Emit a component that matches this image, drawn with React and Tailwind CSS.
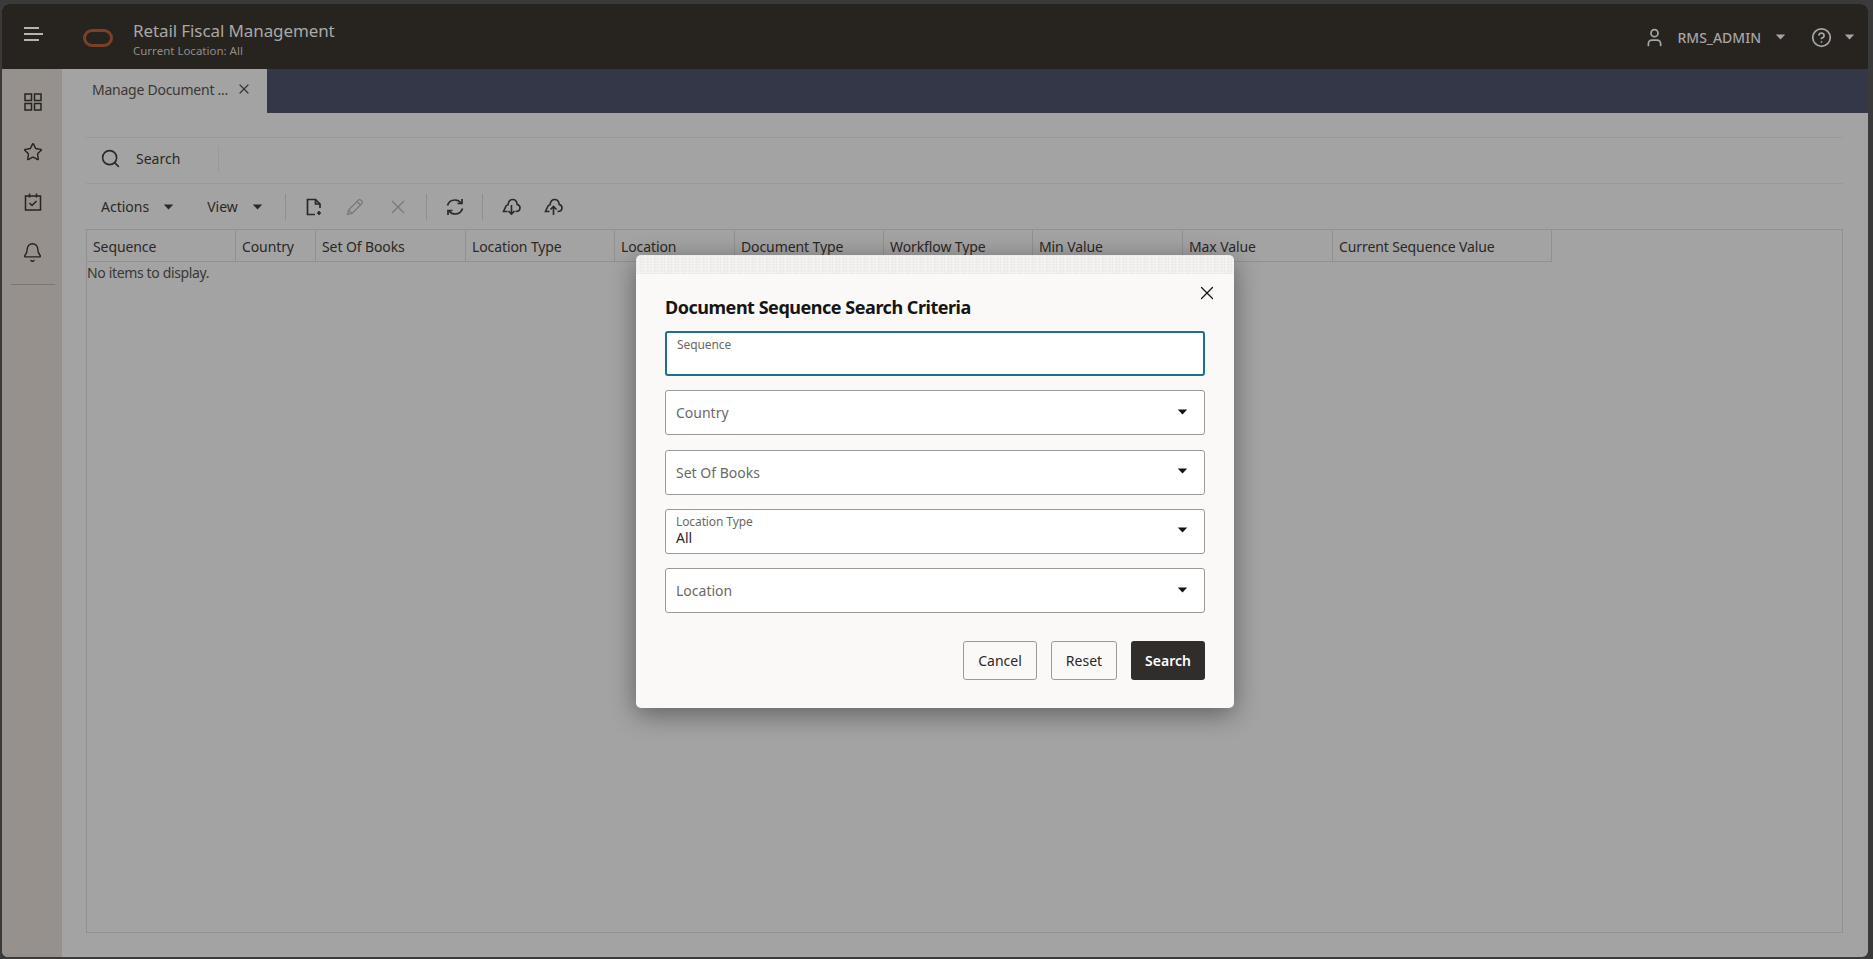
import { Bell, CircleHelp, Search, Star, User, X } from "lucide-react";

const font = "font-['Noto_Sans',sans-serif]";

const columns = [
  { label: "Sequence", width: "w-[149px]" },
  { label: "Country", width: "w-[80px]" },
  { label: "Set Of Books", width: "w-[150px]" },
  { label: "Location Type", width: "w-[149px]" },
  { label: "Location", width: "w-[120px]" },
  { label: "Document Type", width: "w-[149px]" },
  { label: "Workflow Type", width: "w-[149px]" },
  { label: "Min Value", width: "w-[150px]" },
  { label: "Max Value", width: "w-[150px]" },
  { label: "Current Sequence Value", width: "w-[218px]" },
];

function Caret({ className }) {
  return (
    <svg width="12" height="7" viewBox="0 0 12 7" className={className}>
      <path d="M0.5 0.5h11L6 6.5z" fill="currentColor" />
    </svg>
  );
}

function GridIcon() {
  return (
    <svg width="18" height="18" viewBox="0 0 18 18" fill="none" stroke="currentColor" strokeWidth="1.5">
      <rect x="1" y="1" width="6.5" height="6.5" />
      <rect x="10.5" y="1" width="6.5" height="6.5" />
      <rect x="1" y="10.5" width="6.5" height="6.5" />
      <rect x="10.5" y="10.5" width="6.5" height="6.5" />
    </svg>
  );
}

function TaskIcon() {
  return (
    <svg width="18" height="18" viewBox="0 0 18 18" fill="none" stroke="currentColor" strokeWidth="1.5">
      <rect x="1.500" y="3" width="15" height="14" />
      <path d="M5.500 0.500v4M12.500 0.500v4" />
      <path d="M5.500 10l2.500 2.500 4.500-4.500" />
    </svg>
  );
}

function NewFileIcon() {
  return (
    <svg width="18" height="18" viewBox="0 0 18 18" fill="none" stroke="currentColor" strokeWidth="1.700">
      <path d="M10 16.500H2.500V1.500h8l4.500 4.500V10" />
      <path d="M10.500 1.500v4.500H15" />
      <path d="M14 13v4M12 15h4" />
    </svg>
  );
}

function PencilIcon() {
  return (
    <svg width="18" height="18" viewBox="0 0 18 18" fill="none" stroke="currentColor" strokeWidth="1.300">
      <path d="M1.500 16.500l1-4.500L12.500 2a1.500 1.500 0 0 1 2 0l1.500 1.500a1.500 1.500 0 0 1 0 2L6 15.500z" />
      <path d="M2.500 12l3.500 3.500M11 3.500L14.500 7" />
    </svg>
  );
}

function RefreshIcon() {
  return (
    <svg width="18" height="18" viewBox="0 0 18 18" fill="none" stroke="currentColor" strokeWidth="1.700">
      <path d="M1.500 7.500C2.500 4 5.500 2 9 2c2.500 0 4.500 1 6 3" />
      <path d="M16 1v4.500h-4.500" />
      <path d="M16.500 10.500C15.500 14 12.500 16 9 16c-2.500 0-4.500-1-6-3" />
      <path d="M2 17v-4.500h4.500" />
    </svg>
  );
}

function CloudIcon({ up }) {
  return (
    <svg width="19" height="18" viewBox="0 0 19 18" fill="none" stroke="currentColor" strokeWidth="1.600">
      <path d="M5.500 13.500H1.500L3.500 9C3.800 7.800 4.500 7 6 6.700 6.500 3.500 8 1.500 10.500 1.500c2.800 0 4.500 2.200 4.700 5 2 .5 2.800 2 2.800 3.300 0 1.800-1 3.700-4.500 3.700" />
      {up ? <path d="M9.500 17V8.500M6.500 11.500l3-3 3 3" /> : <path d="M9.500 7v9M6.500 13l3 3 3-3" />}
    </svg>
  );
}

function Field({ label, value, select, focused }) {
  const small = focused || value;
  return (
    <div
      className={`flex h-[45px] items-center justify-between rounded-[3px] bg-white pl-[10px] pr-[16px] ${
        focused ? "border-2 border-[#1f6e8c]" : "border border-[#9c9a98]"
      }`}
    >
      {small ? (
        <div className="flex flex-col self-start pt-[5px]">
          <span className="text-[12px] leading-[14px] tracking-[-0.1px] text-[#6b6967]">{label}</span>
          {value && <span className="text-[14px] leading-[18px] text-[#2b2826]">{value}</span>}
        </div>
      ) : (
        <span className="text-[14px] text-[#6b6967]">{label}</span>
      )}
      {select && <Caret className="mb-[2px] h-[6px] w-[11px] text-[#161513]" />}
    </div>
  );
}

function Modal() {
  return (
    <div className="absolute left-[636px] top-[255px] w-[598px] rounded-[5px] bg-[#fbf9f8] shadow-[0_6px_26px_rgba(0,0,0,0.42)]">
      <div className="h-[19px] rounded-t-[5px] bg-[repeating-linear-gradient(90deg,rgba(0,0,0,0.05)_0px,rgba(255,255,255,0)_2px,rgba(0,0,0,0.04)_5px,rgba(255,255,255,0)_7px),repeating-linear-gradient(0deg,rgba(0,0,0,0.04)_0px,rgba(255,255,255,0)_2px,rgba(0,0,0,0.03)_3px)]" />
      <X size={22} strokeWidth={1.4} className="absolute right-[16px] top-[27px] text-[#161513]" />
      <div className="px-[29px] pb-[28px]">
        <h2 className="mt-[21px] text-[18px] font-bold leading-[24px] tracking-[-0.47px] text-[#161513]">
          Document Sequence Search Criteria
        </h2>
        <div className="mt-[12px] flex flex-col gap-[14.25px]">
          <Field label="Sequence" focused />
          <Field label="Country" select />
          <Field label="Set Of Books" select />
          <Field label="Location Type" value="All" select />
          <Field label="Location" select />
        </div>
        <div className="mt-[28px] flex justify-end gap-[14px] text-[14px]">
          <button className="h-[39px] w-[74px] rounded-[3px] border border-[#9c9a98] text-[#2b2826]">Cancel</button>
          <button className="h-[39px] w-[66px] rounded-[3px] border border-[#9c9a98] text-[#2b2826]">Reset</button>
          <button className="h-[39px] w-[74px] rounded-[3px] bg-[#312d2a] font-semibold text-white">Search</button>
        </div>
      </div>
    </div>
  );
}

export default function App() {
  return (
    <div className={`relative h-screen w-full overflow-hidden bg-[#3a3a3a] pb-[2px] pl-[2px] pr-[5px] pt-[4px] ${font}`}>
      <div className="flex h-full flex-col overflow-hidden rounded-[6px] bg-[#a3a3a3]">
        <header className="flex h-[65px] shrink-0 items-center bg-[#27231f] pt-[1px] text-[#a5a5a5]">
          <div className="ml-[22px] -mt-[6px] flex w-[20px] flex-col gap-[4px]">
            <span className="h-[2px] w-[15px] bg-[#b5b3b0]" />
            <span className="h-[2px] w-[19px] bg-[#b5b3b0]" />
            <span className="h-[2px] w-[15px] bg-[#b5b3b0]" />
          </div>
          <span className="ml-[39px] mt-[1px] h-[18px] w-[30px] rounded-[9px] border-[3px] border-[#7b4128]" />
          <div className="ml-[20px] mt-[3px] flex flex-col">
            <span className="text-[17px] leading-[24px] tracking-[-0.1px] text-[#a8a8a8]">Retail Fiscal Management</span>
            <span className="text-[11.5px] leading-[16px] text-[#8f8d8a]">Current Location: All</span>
          </div>
          <div className="ml-auto flex items-center pr-[13px]">
            <User size={21} strokeWidth={2} className="text-[#a5a5a5]" />
            <span className="ml-[12px] text-[14px] font-medium text-[#a5a5a5]">RMS_ADMIN</span>
            <Caret className="ml-[14px] h-[6px] w-[11px] text-[#a5a5a5]" />
            <CircleHelp size={21} strokeWidth={2} className="ml-[25px] text-[#a5a5a5]" />
            <Caret className="ml-[12px] h-[6px] w-[11px] text-[#a5a5a5]" />
          </div>
        </header>

        <div className="flex min-h-0 flex-1">
          <aside className="flex w-[60px] shrink-0 flex-col items-center bg-[#97918d] pl-[1px] pt-[8px] text-[#27231f]">
            <div className="flex h-[50px] items-center"><GridIcon /></div>
            <div className="flex h-[50px] items-center"><Star size={20} strokeWidth={1.700} /></div>
            <div className="flex h-[50px] items-center"><TaskIcon /></div>
            <div className="flex h-[50px] items-center"><Bell size={21} strokeWidth={1.600} /></div>
            <div className="mt-[7px] h-px w-[44px] bg-[#7c7773]" />
          </aside>

          <main className="flex min-w-0 flex-1 flex-col">
            <div className="flex h-[44px] shrink-0 bg-[#333748]">
              <div className="flex w-[205px] items-center bg-[#a3a3a3] pb-[4px] pl-[30px] text-[14px] tracking-[-0.25px] text-[#3a3735]">
                <span>Manage Document ...</span>
                <X size={16} strokeWidth={1.800} className="ml-[8px]" />
              </div>
            </div>

            <div className="flex min-h-0 flex-1 flex-col pb-[24px] pl-[24px] pr-[25px] pt-[24px]">
              <div className="flex h-[47px] shrink-0 items-center border-y border-[#999999] pb-[4px] text-[14px] text-[#2b2826]">
                <Search size={21} strokeWidth={1.800} className="ml-[14px]" />
                <span className="ml-[15px]">Search</span>
                <span className="ml-[38px] h-[26px] w-px bg-[#999999]" />
              </div>

              <div className="flex h-[45px] shrink-0 items-center text-[14px] text-[#2b2826]">
                <span className="ml-[15px]">Actions</span>
                <Caret className="ml-[14px] h-[6px] w-[11px]" />
                <span className="ml-[33px]">View</span>
                <Caret className="ml-[14px] h-[6px] w-[11px]" />
                <span className="ml-[22px] h-[26px] w-px bg-[#8f8f8f]" />
                <span className="ml-[19px]"><NewFileIcon /></span>
                <span className="ml-[23px] text-[#7a7a7a]"><PencilIcon /></span>
                <X size={22} strokeWidth={1.400} className="ml-[23px] text-[#7a7a7a]" />
                <span className="ml-[17px] h-[26px] w-px bg-[#8f8f8f]" />
                <span className="ml-[19px]"><RefreshIcon /></span>
                <span className="ml-[18px] h-[26px] w-px bg-[#8f8f8f]" />
                <span className="ml-[19px]"><CloudIcon /></span>
                <span className="ml-[23px]"><CloudIcon up /></span>
              </div>

              <div className="min-h-0 flex-1 border border-[#919191]">
                <div className="flex h-[32px] w-fit border-b border-r border-[#919191] text-[14px] tracking-[-0.1px] text-[#2b2826]">
                  {columns.map((col, i) => (
                    <div
                      key={col.label}
                      className={`flex items-center pl-[6px] pt-[2px] ${col.width} ${i < columns.length - 1 ? "border-r border-[#919191]" : ""}`}
                    >
                      {col.label}
                    </div>
                  ))}
                </div>
                <div className="pt-[1px] text-[14px] leading-[20px] tracking-[-0.35px] text-[#3a3735]">No items to display.</div>
              </div>
            </div>
          </main>
        </div>
      </div>
      <Modal />
    </div>
  );
}
